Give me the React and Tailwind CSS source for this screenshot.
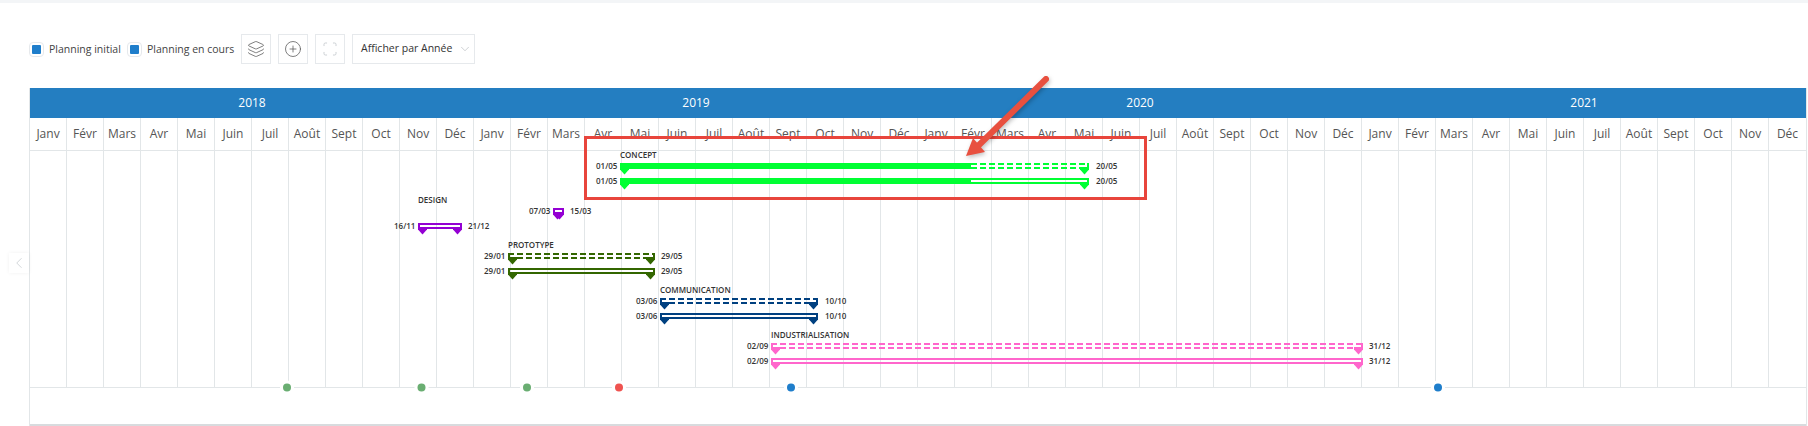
import { Layers, CirclePlus, Scan, ChevronDown, ChevronLeft } from 'lucide-react';

const years = ['2018', '2019', '2020', '2021'];
const monthNames = ['Janv', 'Févr', 'Mars', 'Avr', 'Mai', 'Juin', 'Juil', 'Août', 'Sept', 'Oct', 'Nov', 'Déc'];
const months = [...monthNames, ...monthNames, ...monthNames, ...monthNames];

// all coordinates below are relative to the chart body (x - 30, y - 150)
const GREEN = '#00ff33';
const PURPLE = '#9400d3';
const OLIVE = '#336600';
const NAVY = '#004080';
const PINK = '#ff66cc';

const bars = [
  { x: 590, w: 469, y: 13, color: GREEN, dashed: true, done: 351 },
  { x: 590, w: 469, y: 28, color: GREEN, done: 351 },
  { x: 388, w: 44, y: 73, color: PURPLE },
  { x: 523, w: 11, y: 58, color: PURPLE },
  { x: 478, w: 147, y: 103, color: OLIVE, dashed: true },
  { x: 478, w: 147, y: 118, color: OLIVE },
  { x: 630, w: 158, y: 148, color: NAVY, dashed: true },
  { x: 630, w: 158, y: 163, color: NAVY },
  { x: 741, w: 592, y: 193, color: PINK, dashed: true },
  { x: 741, w: 592, y: 208, color: PINK },
];

const labels = [
  { text: 'CONCEPT', x: 590, y: 5 },
  { text: 'DESIGN', x: 388, y: 50 },
  { text: 'PROTOTYPE', x: 478, y: 95 },
  { text: 'COMMUNICATION', x: 630, y: 140 },
  { text: 'INDUSTRIALISATION', x: 741, y: 185 },
];

const dates = [
  { text: '01/05', x: 566, y: 16 },
  { text: '20/05', x: 1066, y: 16 },
  { text: '01/05', x: 566, y: 31 },
  { text: '20/05', x: 1066, y: 31 },
  { text: '07/03', x: 499, y: 61 },
  { text: '15/03', x: 540, y: 61 },
  { text: '16/11', x: 364, y: 76 },
  { text: '21/12', x: 438, y: 76 },
  { text: '29/01', x: 454, y: 106 },
  { text: '29/05', x: 631, y: 106 },
  { text: '29/01', x: 454, y: 121 },
  { text: '29/05', x: 631, y: 121 },
  { text: '03/06', x: 606, y: 151 },
  { text: '10/10', x: 795, y: 151 },
  { text: '03/06', x: 606, y: 166 },
  { text: '10/10', x: 795, y: 166 },
  { text: '02/09', x: 717, y: 196 },
  { text: '31/12', x: 1339, y: 196 },
  { text: '02/09', x: 717, y: 211 },
  { text: '31/12', x: 1339, y: 211 },
];

const dots = [
  { x: 257, color: '#6aae72' },
  { x: 391.5, color: '#6aae72' },
  { x: 497, color: '#6aae72' },
  { x: 589, color: '#ef5350' },
  { x: 761, color: '#1f7ecb' },
  { x: 1408, color: '#1f7ecb' },
];

function Flag({ x, y, color }) {
  return (
    <polygon
      points={`${x},${y + 4} ${x + 9},${y + 4} ${x + 9},${y + 6.5} ${x + 4.5},${y + 11.5} ${x},${y + 6.5}`}
      fill={color}
    />
  );
}

function Bar({ x, w, y, color, dashed, done = 0 }) {
  const lineStart = x + done;
  const dash = dashed ? '6 3' : undefined;
  return (
    <g>
      <line x1={lineStart} x2={x + w} y1={y + 1} y2={y + 1} stroke={color} strokeWidth="2" strokeDasharray={dash} />
      <line x1={lineStart} x2={x + w} y1={y + 5} y2={y + 5} stroke={color} strokeWidth="2" strokeDasharray={dash} />
      <rect x={x} y={y} width="2" height="6" fill={color} />
      <rect x={x + w - 2} y={y} width="2" height="6" fill={color} />
      {done > 0 && <rect x={x} y={y} width={done} height="6" fill={color} />}
      <Flag x={x} y={y} color={color} />
      <Flag x={x + w - 9} y={y} color={color} />
    </g>
  );
}

function Check({ label }) {
  return (
    <div className="mt-px flex items-center">
      <span className="flex h-[15px] w-[15px] items-center justify-center rounded-sm border border-[#e6e9ec]">
        <span className="h-[9px] w-[9px] rounded-[1px] bg-[#1f7ecb]" />
      </span>
      <span className="ml-[5px] whitespace-nowrap text-[10.5px] text-[#444]">{label}</span>
    </div>
  );
}

export default function App() {
  return (
    <div className="relative h-[426px] w-[1808px] overflow-hidden bg-white font-['Open_Sans',sans-serif]">
      <div className="h-[3px] bg-[#f3f5f7]" />

      <div className="ml-[29px] mt-[31px] flex h-[30px] items-center">
        <div className="w-[98px]">
          <Check label="Planning initial" />
        </div>
        <div className="w-[114px]">
          <Check label="Planning en cours" />
        </div>
        <button className="flex h-[30px] w-[30px] items-center justify-center border border-[#e6e9ec]">
          <Layers size={18} strokeWidth={1} className="text-[#555]" />
        </button>
        <button className="ml-[7px] flex h-[30px] w-[30px] items-center justify-center border border-[#e6e9ec]">
          <CirclePlus size={18} strokeWidth={1} className="text-[#555]" />
        </button>
        <button className="ml-[7px] flex h-[30px] w-[30px] items-center justify-center border border-[#e6e9ec]">
          <Scan size={16} strokeWidth={1.5} className="text-[#ccd0d4]" />
        </button>
        <div className="ml-[7px] flex h-[30px] w-[123px] items-center whitespace-nowrap border border-[#e6e9ec] pl-[8px] text-[10.5px] text-[#333]">
          Afficher par Année
          <ChevronDown size={14} strokeWidth={1} className="ml-[6px] text-[#aab0b5]" />
        </div>
      </div>

      <div className="ml-[29px] mt-[24px] w-[1778px] border-x border-[#e2e6e8]">
        <div className="grid h-[30px] grid-cols-4 bg-[#247ec1]">
          {years.map((y) => (
            <div key={y} className="flex items-center justify-center text-[12px] font-medium text-white">
              {y}
            </div>
          ))}
        </div>

        <div className="grid h-[32px] grid-cols-[repeat(48,37px)]">
          {months.map((m, i) => (
            <div
              key={i}
              className="flex items-center justify-center border-r border-[#e2e6e8] text-[12px] text-[#555] last:border-r-0"
            >
              {m}
            </div>
          ))}
        </div>

        <div className="relative h-[238px] border-y border-[#e2e6e8]">
          <div className="grid h-full grid-cols-[repeat(48,37px)]">
            {months.map((m, i) => (
              <div key={i} className="border-r border-[#e2e6e8] last:border-r-0" />
            ))}
          </div>

          <div className="absolute inset-x-0 -top-px">
            <svg className="absolute left-0 top-0 overflow-visible" width="1776" height="237">
              {bars.map((b, i) => (
                <Bar key={i} {...b} />
              ))}
              {dots.map((d, i) => (
                <g key={i}>
                  <circle cx={d.x} cy="237.5" r="7" fill="#fff" />
                  <circle cx={d.x} cy="237.5" r="4" fill={d.color} />
                </g>
              ))}
            </svg>

            {labels.map((l) => (
              <span
                key={l.text}
                className="absolute whitespace-nowrap text-[8px] font-semibold leading-[10px] text-[#333]"
                style={{ left: l.x, top: l.y - 5 }}
              >
                {l.text}
              </span>
            ))}
            {dates.map((d, i) => (
              <span
                key={i}
                className="absolute text-[8px] font-semibold leading-[10px] text-[#333]"
                style={{ left: d.x, top: d.y - 5 }}
              >
                {d.text}
              </span>
            ))}
          </div>
        </div>

        <div className="h-[38px] border-b-2 border-[#d8dbde]" />
      </div>

      {/* navigation arrow on the left edge */}
      <div className="absolute left-[9px] top-[253px] flex h-[20px] w-[20px] items-center justify-center bg-white shadow-[0_0_4px_rgba(0,0,0,0.06)]">
        <ChevronLeft size={18} strokeWidth={1} className="text-[#c4c9ce]" />
      </div>

      {/* annotation drawn over the screenshot */}
      <div className="absolute left-[584px] top-[136px] h-[64px] w-[563px] border-[3px] border-[#e8453c]" />
      <svg className="absolute left-[950px] top-[70px] drop-shadow-[1px_2px_2px_rgba(0,0,0,0.25)]" width="110" height="100">
        <line x1="96" y1="9" x2="29" y2="75" stroke="#e8503f" strokeWidth="6" strokeLinecap="round" />
        <polygon points="16,86 23,68 35,82" fill="#e8503f" />
      </svg>
    </div>
  );
}
